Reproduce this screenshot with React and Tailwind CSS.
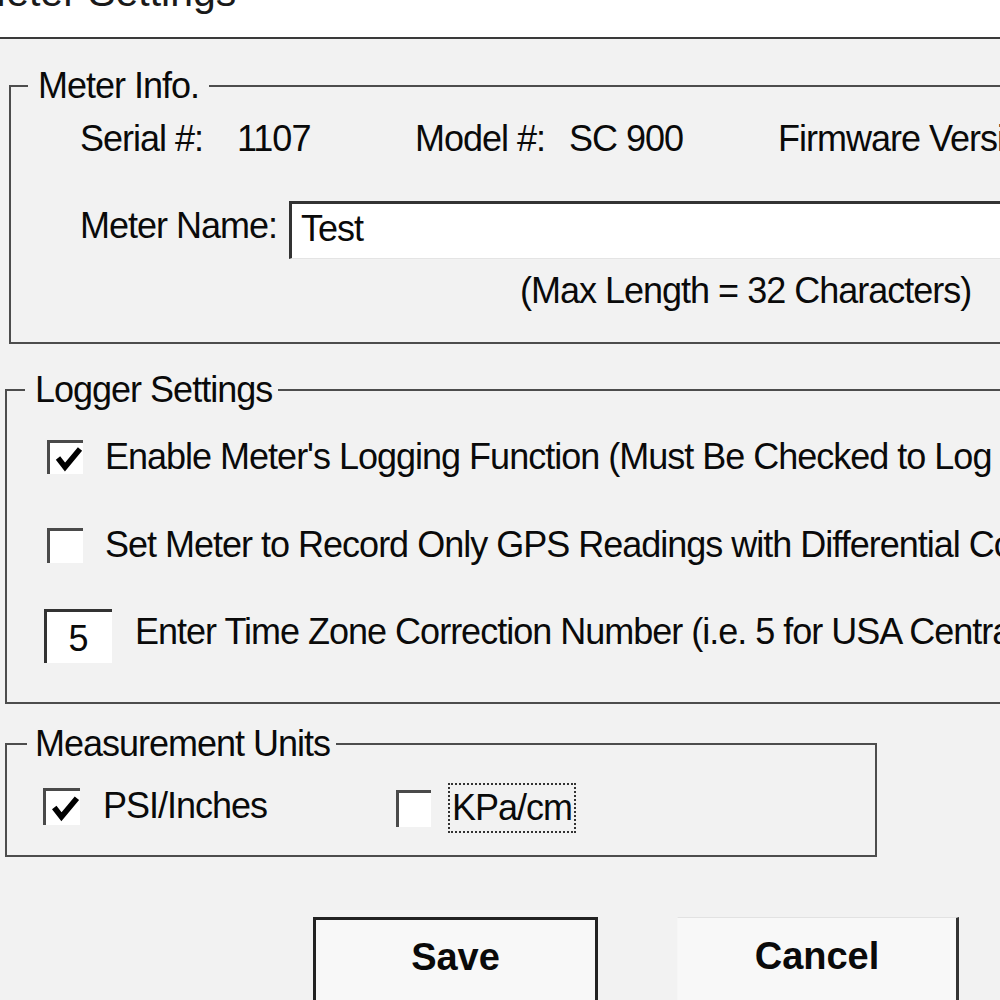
import React from "react";

function Check() {
  return (
    <svg viewBox="0 0 33 31" className="w-full h-full block">
      <polyline points="8,15 15,24 30,6" fill="none" stroke="#000" strokeWidth="5.5" strokeLinejoin="miter" strokeLinecap="butt" />
    </svg>
  );
}

function Box({ checked, className = "" }) {
  return (
    <div className={"shrink-0 bg-white border-l-[3px] border-t-[3px] border-l-[#4a4a4a] border-t-[#4a4a4a] " + className}>
      {checked ? <Check /> : null}
    </div>
  );
}

export default function App() {
  return (
    <div className="w-[1000px] h-[1000px] overflow-hidden bg-[#f2f2f2] text-[#0a0a0a] font-['Liberation_Sans',Arial,sans-serif] text-[36px] leading-[36px] tracking-[-1px]">
      <div className="h-[39px] bg-white overflow-hidden border-b-2 border-[#3a3a3a]">
        <div className="-ml-[28px] -mt-[28px] text-[41px] leading-[40px] tracking-[0px] whitespace-nowrap text-[#1a1a1a]">
          Meter Settings
        </div>
      </div>

      <fieldset className="mt-[29px] ml-[9px] w-[1100px] border-2 border-[#4d4d4d] pb-[33px]">
        <legend className="ml-[17px] px-[10px] leading-[36px]">Meter Info.</legend>
        <div className="mt-[17px] flex whitespace-nowrap pl-[69px]">
          <span className="w-[157px]">Serial #:</span>
          <span className="w-[178px]">1107</span>
          <span className="w-[154px]">Model #:</span>
          <span className="w-[209px]">SC 900</span>
          <span>Firmware Version:</span>
        </div>
        <div className="mt-[44px] flex items-start pl-[69px] whitespace-nowrap">
          <span className="w-[209px] mt-[7px] shrink-0">Meter Name:</span>
          <div className="flex-1 h-[58px] bg-white border-l-[3px] border-t-[3px] border-l-[#333] border-t-[#333] border-b border-b-[#e4e4e4] pl-[9px] pt-[7px]">
            Test
          </div>
        </div>
        <div className="mt-[14px] pl-[509px] whitespace-nowrap">(Max Length = 32 Characters)</div>
      </fieldset>

      <fieldset className="mt-[28px] ml-[5px] w-[1100px] border-2 border-[#4d4d4d] pb-[39px]">
        <legend className="ml-[18px] pl-[10px] pr-[6px] leading-[36px]">Logger Settings</legend>
        <div className="mt-[31px] h-[36px] flex items-center pl-[40px] whitespace-nowrap">
          <Box checked className="w-[36px] h-[34px]" />
          <span className="ml-[22px]">Enable Meter's Logging Function (Must Be Checked to Log Data)</span>
        </div>
        <div className="mt-[52px] h-[36px] flex items-center pl-[40px] whitespace-nowrap">
          <Box className="w-[36px] h-[35px]" />
          <span className="ml-[22px]">Set Meter to Record Only GPS Readings with Differential Correction</span>
        </div>
        <div className="mt-[46px] h-[54px] flex items-center pl-[37px] whitespace-nowrap">
          <div className="shrink-0 w-[68px] h-[54px] bg-white border-l-[3px] border-t-[3px] border-l-[#333] border-t-[#333] flex justify-center pt-[9px] pr-[3px]">
            5
          </div>
          <span className="ml-[23px] mb-[8px]">Enter Time Zone Correction Number (i.e. 5 for USA Central Time)</span>
        </div>
      </fieldset>

      <fieldset className="mt-[22px] ml-[5px] w-[872px] border-2 border-[#4d4d4d] pb-[31px]">
        <legend className="ml-[20px] pl-[8px] pr-[6px] leading-[36px]">Measurement Units</legend>
        <div className="mt-[26px] h-[36px] flex items-center pl-[36px] whitespace-nowrap">
          <div className="w-[353px] flex items-center">
            <Box checked className="w-[37px] h-[37px]" />
            <span className="ml-[23px]">PSI/Inches</span>
          </div>
          <Box className="w-[35px] h-[37px] mt-[4px]" />
          <div className="ml-[17px] h-[50px] mt-[4px] border-2 border-dotted border-[#333] px-[2px] flex items-center">
            KPa/cm
          </div>
        </div>
      </fieldset>

      <div className="mt-[60px] flex pl-[313px]">
        <div className="shrink-0 w-[285px] h-[100px] border-[3px] border-[#222] bg-[#f8f8f8] flex justify-center pt-[18px] font-bold text-[38px] leading-[38px] tracking-[0px]">
          Save
        </div>
        <div className="shrink-0 ml-[79px] w-[282px] h-[100px] border-r-[3px] border-b-[3px] border-r-[#333] border-b-[#333] border-t border-l border-t-[#e2e2e2] border-l-[#f6f6f6] bg-[#f8f8f8] flex justify-center pt-[19px] font-bold text-[38px] leading-[38px] tracking-[0px]">
          Cancel
        </div>
      </div>
    </div>
  );
}
